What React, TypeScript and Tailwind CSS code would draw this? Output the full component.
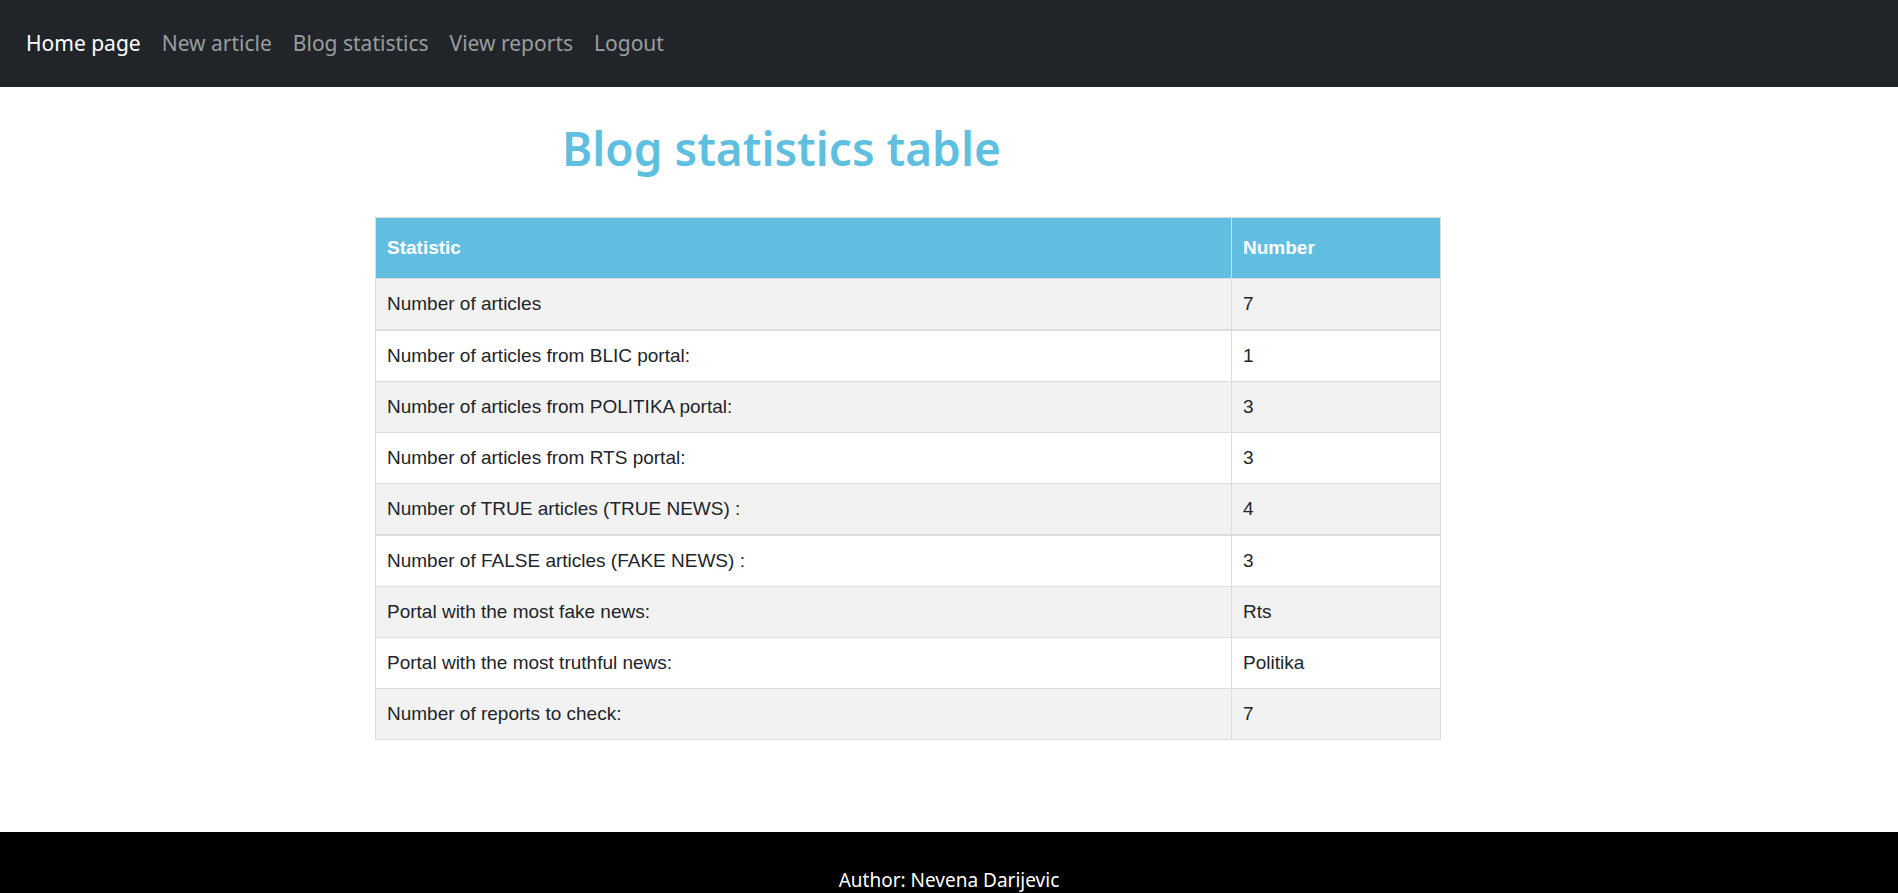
import React from "react";

const rows: [string, string][] = [
  ["Number of articles", "7"],
  ["Number of articles from BLIC portal:", "1"],
  ["Number of articles from POLITIKA portal:", "3"],
  ["Number of articles from RTS portal:", "3"],
  ["Number of TRUE articles (TRUE NEWS) :", "4"],
  ["Number of FALSE articles (FAKE NEWS) :", "3"],
  ["Portal with the most fake news:", "Rts"],
  ["Portal with the most truthful news:", "Politika"],
  ["Number of reports to check:", "7"],
];

export default function App() {
  return (
    <div className="min-h-[893px] flex flex-col bg-white">
      <nav className="h-[87px] bg-[#212529] flex items-center px-[26px] gap-[21px] text-[21px] font-['Noto_Sans',sans-serif]">
        <a className="text-white">Home page</a>
        <a className="text-[#9a9c9f]">New article</a>
        <a className="text-[#9a9c9f]">Blog statistics</a>
        <a className="text-[#9a9c9f]">View reports</a>
        <a className="text-[#9a9c9f]">Logout</a>
      </nav>
      <main className="flex-1">
        <h1 className="pl-[562px] pt-[25px] text-[46px] leading-[72px] font-semibold text-[#5fbfe0] font-['Noto_Sans',sans-serif]">
          Blog statistics table
        </h1>
        <div className="pl-[375px] pt-[33px]">
          <table className="w-[1066px] border-collapse font-['Liberation_Sans',Arial,sans-serif] text-[19px] text-[#212529]">
            <thead>
              <tr className="bg-[#62bee0] text-white h-[61px]">
                <th className="text-left font-bold px-[11px] border border-[#dddddd]">Statistic</th>
                <th className="text-left font-bold px-[11px] border border-[#dddddd] w-[209px]">Number</th>
              </tr>
            </thead>
            <tbody>
              {rows.map(([a, b], i) => (
                <tr
                  key={i}
                  className={`${i % 2 === 0 ? "bg-[#f2f2f2]" : "bg-white"} ${i === 1 || i === 5 ? "h-[52px] border-t-2 border-t-[#dddddd]" : "h-[51px]"}`}
                >
                  <td className="px-[11px] border border-[#dddddd]">{a}</td>
                  <td className="px-[11px] border border-[#dddddd]">{b}</td>
                </tr>
              ))}
            </tbody>
          </table>
        </div>
      </main>
      <footer className="bg-black h-[80px] flex justify-center pt-[34px] mt-[92px]">
        <span className="text-white text-[19px] leading-[28px] font-['Noto_Sans',sans-serif]">Author: Nevena Darijevic</span>
      </footer>
    </div>
  );
}
